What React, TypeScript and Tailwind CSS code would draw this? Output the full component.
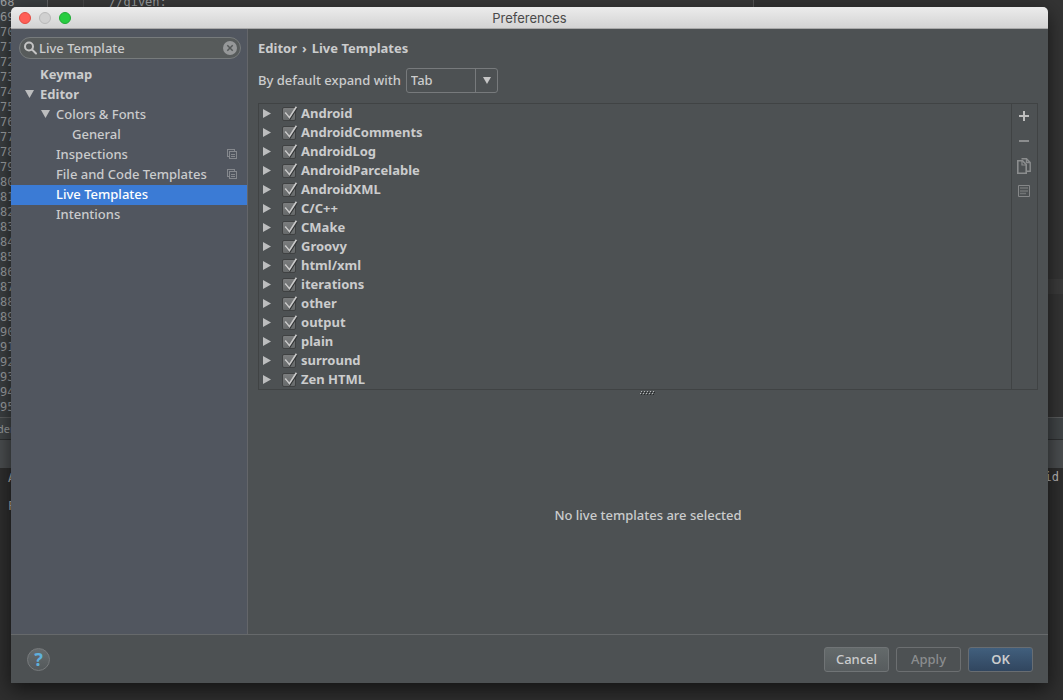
import React, { useState } from "react";

const lineNumbers = Array.from({ length: 28 }, (_, i) => 68 + i);

const templateGroups = [
  "Android",
  "AndroidComments",
  "AndroidLog",
  "AndroidParcelable",
  "AndroidXML",
  "C/C++",
  "CMake",
  "Groovy",
  "html/xml",
  "iterations",
  "other",
  "output",
  "plain",
  "surround",
  "Zen HTML",
];

function EditorBackdrop() {
  return (
    <div
      aria-hidden="true"
      className="absolute inset-0 flex flex-col overflow-hidden bg-[#333333] font-['DejaVu_Sans_Mono',monospace] text-xs leading-[15px] text-[#9a9d9f]"
    >
      <div className="flex h-[417px] shrink-0">
        <div className="flex w-12 flex-col border-r border-[#606264] bg-[#3b3f41]">
          <div className="-mt-[5px]">
            {lineNumbers.map((n) => (
              <div key={n}>{n}</div>
            ))}
          </div>
        </div>
        <div className="w-9 border-r border-[#484848] bg-[#393939]" />
        <div className="-mt-[5px] w-[670px] border-r border-[#555555] bg-[#393939] pl-[25px]">//given:</div>
        <div className="flex-1 bg-[#343434] pt-[279px]">
          <div className="h-[15px] bg-[#3b3b3b]" />
        </div>
      </div>
      <div className="flex h-[23px] shrink-0 items-center border-t border-b border-t-[#5a5c5d] border-b-[#2e3031] bg-[#414547] font-['Noto_Sans',sans-serif] text-[11px]">
        <span className="-ml-[3px]">der</span>
      </div>
      <div className="h-7 shrink-0 bg-[#4a4d4f]" />
      <div className="flex flex-1 justify-between bg-[#2e2e2e] pt-[2px] pr-1 pl-2 leading-[14px] text-[#b8b8b8]">
        <div className="pt-[1px]">
          <div>A</div>
          <div className="pt-[14px]">F</div>
        </div>
        <div>id</div>
      </div>
    </div>
  );
}

function TitleBar() {
  return (
    <header className="relative flex h-[22px] shrink-0 items-center justify-center rounded-t-[5px] border-b border-[#a9a9a9] bg-linear-to-b from-[#ececec] to-[#d3d3d3]">
      <div className="absolute left-2 flex gap-2">
        <button aria-label="Close" className="size-3 rounded-full border border-[#e24b41] bg-[#ff5f57]" />
        <button aria-label="Minimize" className="size-3 rounded-full border border-[#b9b9b9] bg-[#d0d0d0]" />
        <button aria-label="Zoom" className="size-3 rounded-full border border-[#1faa35] bg-[#28cd41]" />
      </div>
      <h1 className="pt-[2px] font-['Inter',sans-serif] text-[13px] leading-none text-[#4a4a4a]">Preferences</h1>
    </header>
  );
}

function SharedIcon() {
  return (
    <svg className="ml-auto h-[10px] w-[10px]" viewBox="0 0 10 10" fill="none" stroke="#85888d" shapeRendering="crispEdges" aria-hidden="true">
      <path d="M2.5 7.5H.5V.5h7v2" />
      <path d="M2.5 2.5h7v7h-7zM4 5h4M4 7.5h4" />
    </svg>
  );
}

function DownTriangle() {
  return (
    <svg className="h-2 w-[9px]" viewBox="0 0 9 8" fill="#bcbdbe" aria-hidden="true">
      <path d="M0 0h9L4.5 8z" />
    </svg>
  );
}

type NavProps = { label: string; pad: string; bold?: boolean; open?: boolean; shared?: boolean; active?: boolean };

function NavItem({ label, pad, bold, open, shared, active }: NavProps) {
  return (
    <li>
      <button
        aria-current={active ? "page" : undefined}
        className={`flex h-5 w-full items-center pr-[10px] pb-[2px] text-left ${pad} ${bold ? "font-bold" : "font-medium"} ${
          active ? "bg-[#3b7bd5] text-white" : ""
        }`}
      >
        <span className="w-4 shrink-0 pl-px">{open && <DownTriangle />}</span>
        <span>{label}</span>
        {shared && <SharedIcon />}
      </button>
    </li>
  );
}

function Sidebar() {
  const [query, setQuery] = useState("Live Template");
  return (
    <aside className="flex w-[237px] shrink-0 flex-col border-r border-[#64666a] bg-[#51565f]">
      <div className="mt-2 mr-[6px] ml-2 flex h-[22px] items-center gap-px rounded-full border border-[#777b7c] bg-[#575b5b] px-[3px] pl-1">
        <svg className="size-[14px] shrink-0" viewBox="0 0 14 14" fill="none" stroke="#c4c4c4" strokeWidth="2" aria-hidden="true">
          <circle cx="5" cy="5.5" r="4" />
          <path d="M8 8.5l4 4" strokeLinecap="round" />
        </svg>
        <input
          aria-label="Search preferences"
          value={query}
          onChange={(e) => setQuery(e.target.value)}
          className="min-w-0 flex-1 bg-transparent font-medium outline-none"
        />
        <button aria-label="Clear search" onClick={() => setQuery("")}>
          <svg className="block size-[14px]" viewBox="0 0 14 14" aria-hidden="true">
            <circle cx="7" cy="7" r="7" fill="#969899" />
            <path d="M4.3 4.3l5.4 5.4M9.7 4.3L4.3 9.7" stroke="#555959" strokeWidth="1.5" />
          </svg>
        </button>
      </div>
      <nav aria-label="Settings" className="mt-[6px]">
        <ul>
          <NavItem label="Keymap" pad="pl-[13px]" bold />
          <NavItem label="Editor" pad="pl-[13px]" bold open />
          <NavItem label="Colors & Fonts" pad="pl-[29px]" open />
          <NavItem label="General" pad="pl-[45px]" />
          <NavItem label="Inspections" pad="pl-[29px]" shared />
          <NavItem label="File and Code Templates" pad="pl-[29px]" shared />
          <NavItem label="Live Templates" pad="pl-[29px]" active />
          <NavItem label="Intentions" pad="pl-[29px]" />
        </ul>
      </nav>
    </aside>
  );
}

function TemplateRow({ name }: { name: string }) {
  const [on, setOn] = useState(true);
  return (
    <li className="flex h-[19px] items-center pl-1">
      <button aria-label={`Expand ${name}`} className="w-[19px] shrink-0">
        <svg className="block h-[9px] w-2" viewBox="0 0 8 9" fill="#bcbdbe" aria-hidden="true">
          <path d="M0 0l8 4.5L0 9z" />
        </svg>
      </button>
      <label className="flex items-center gap-[5px] font-bold">
        <span className="relative">
          <input
            type="checkbox"
            checked={on}
            onChange={() => setOn(!on)}
            className="block size-[14px] appearance-none rounded-[2px] border border-[#3f4142] bg-linear-to-b from-[#7b7d7e] to-[#676a6b]"
          />
          {on && (
            <svg className="pointer-events-none absolute -top-[2px] left-0 h-4 w-4" viewBox="0 0 16 16" fill="none" aria-hidden="true">
              <path d="M4 8.6l4 5.2L15 3" stroke="#333536" strokeWidth="1.6" />
              <path d="M3.2 7.6l4.2 5L14.4 1.8" stroke="#c9c9c9" strokeWidth="1.6" />
            </svg>
          )}
        </span>
        <span className="pb-[2px]">{name}</span>
      </label>
    </li>
  );
}

function SideToolbar() {
  return (
    <div role="toolbar" aria-label="Template actions" className="flex w-[26px] shrink-0 flex-col items-center border-l border-[#404344] pr-px">
      <button aria-label="Add" className="flex h-[25px] items-center pb-[2px]">
        <svg className="size-4" viewBox="0 0 16 16" stroke="#bdbdbd" strokeWidth="2" aria-hidden="true">
          <path d="M8 3v10M3 8h10" />
        </svg>
      </button>
      <button aria-label="Remove" className="flex h-[25px] items-center pb-[2px]">
        <svg className="size-4" viewBox="0 0 16 16" stroke="#8b8d8e" strokeWidth="2" aria-hidden="true">
          <path d="M3 8h10" />
        </svg>
      </button>
      <button aria-label="Duplicate" className="flex h-[25px] items-center pb-[2px]">
        <svg className="size-4" viewBox="0 0 16 16" fill="none" stroke="#8b8d8e" strokeWidth="1.6" aria-hidden="true">
          <path d="M1.8 2.8h4.7l3.7 3.7v8.7H1.8z" />
          <path d="M6 3v4h4" strokeWidth="1.2" />
          <path d="M5.5.8h5l3.7 3.7v8.7h-3.5M10.5 1v3.5H14" strokeWidth="1.4" />
        </svg>
      </button>
      <button aria-label="Restore defaults" className="flex h-[25px] items-center pb-[2px]">
        <svg className="size-4" viewBox="0 0 16 16" fill="none" stroke="#858788" aria-hidden="true">
          <path d="M2.5 2.5h11v11h-11z" />
          <path d="M4 5h8M4 8h8M4 10.5h6" stroke="#717475" strokeWidth="1.6" />
        </svg>
      </button>
    </div>
  );
}

function Content() {
  return (
    <main className="flex min-w-0 flex-1 flex-col px-[10px]">
      <h2 className="mt-[9px] flex h-5 gap-[5px] leading-5 font-bold">
        <span>Editor</span>
        <span>›</span>
        <span>Live Templates</span>
      </h2>
      <div className="mt-[10px] flex items-center gap-[5px] font-medium">
        <label htmlFor="expand-key" className="pb-[2px]">
          By default expand with
        </label>
        <div className="relative">
          <select
            id="expand-key"
            defaultValue="Tab"
            className="block h-[25px] w-[92px] appearance-none rounded-[3px] border border-[#777a7c] bg-[#4d5153] pb-[2px] pl-1 font-medium"
          >
            <option>Tab</option>
            <option>Enter</option>
            <option>Space</option>
          </select>
          <span className="pointer-events-none absolute inset-y-0 right-0 flex w-[23px] items-center justify-center border-l border-[#777a7c]">
            <svg className="h-[7px] w-2" viewBox="0 0 8 7" fill="#c6c6c6" aria-hidden="true">
              <path d="M0 0h8L4 7z" />
            </svg>
          </span>
        </div>
      </div>
      <div className="mt-[10px] flex border border-[#404344]">
        <ul className="min-w-0 flex-1">
          {templateGroups.map((name) => (
            <TemplateRow key={name} name={name} />
          ))}
        </ul>
        <SideToolbar />
      </div>
      <div role="separator" className="flex h-[6px] items-center justify-center">
        <svg className="h-[4px] w-4" viewBox="0 0 16 4" shapeRendering="crispEdges" aria-hidden="true">
          {[0, 3, 6, 9, 12].map((x) => (
            <g key={x}>
              <path d={`M${x + 1} 0h1v1h-1zM${x} 2h1v1h-1z`} fill="#b5b7b8" />
              <path d={`M${x + 2} 1h1v1h-1zM${x + 1} 3h1v1h-1z`} fill="#252728" />
            </g>
          ))}
        </svg>
      </div>
      <p className="flex flex-1 items-center justify-center font-medium">No live templates are selected</p>
    </main>
  );
}

function Footer() {
  return (
    <footer className="flex h-[49px] shrink-0 items-center gap-[7px] border-t border-[#66696b] pr-[15px] pl-4">
      <button
        aria-label="Help"
        className="mr-auto size-[23px] rounded-full border border-[#777a7c] bg-linear-to-b from-[#666b6d] to-[#54595b] text-lg leading-5 font-bold text-[#5fb0dc]"
      >
        ?
      </button>
      <button className="h-[25px] w-[65px] rounded-[3px] border border-[#707476] bg-linear-to-b from-[#646a6b] to-[#575c5e] font-medium">
        Cancel
      </button>
      <button disabled className="h-[25px] w-[65px] rounded-[3px] border border-[#6c6f71] font-medium text-[#8b8d8f]">
        Apply
      </button>
      <button className="h-[25px] w-[65px] rounded-[3px] border border-[#686d72] bg-linear-to-b from-[#415f7d] to-[#31465f] font-semibold">
        OK
      </button>
    </footer>
  );
}

export default function App() {
  return (
    <div className="relative flex min-h-screen flex-col bg-[#2e2e2e] pt-[7px] pr-[15px] pb-[17px] pl-[11px]">
      <EditorBackdrop />
      <div
        role="dialog"
        aria-label="Preferences"
        className="relative flex flex-1 flex-col rounded-t-[5px] bg-[#4d5153] font-['Noto_Sans',sans-serif] text-[13px] leading-[18px] text-[#cbcccd] shadow-[0_6px_20px_rgba(0,0,0,0.6)]"
      >
        <TitleBar />
        <div className="flex flex-1">
          <Sidebar />
          <Content />
        </div>
        <Footer />
      </div>
    </div>
  );
}
